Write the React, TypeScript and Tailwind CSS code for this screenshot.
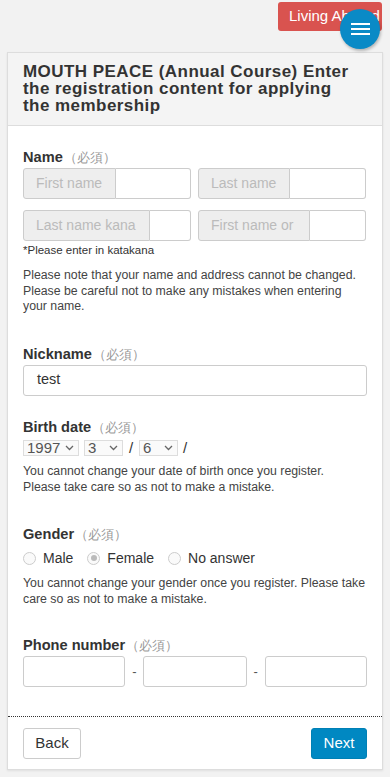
import React from "react";

const Req = () => <span className="text-[13px] font-normal text-[#999] ml-[1px]">（必須）</span>;

function Addon({ label, addonW, inputW }: { label: string; addonW: string; inputW: string }) {
  return (
    <div className="flex h-[31px]">
      <div className={`${addonW} flex items-center pl-[12px] bg-[#eee] border border-[#ccc] rounded-l-[3px] text-[14px] text-[#bbb] whitespace-nowrap overflow-hidden`}>
        {label}
      </div>
      <div className={`${inputW} bg-white border border-l-0 border-[#ccc] rounded-r-[3px]`} />
    </div>
  );
}

function Sel({ v, w }: { v: string; w: string }) {
  return (
    <div className={`${w} h-[16px] flex items-center justify-between border border-[#ddd] bg-[#fafafa] pl-[3px] pr-[4px] text-[15px] leading-none text-[#555]`}>
      <span>{v}</span>
      <svg width="9" height="6" viewBox="0 0 9 6"><path d="M1 1l3.5 3.5L8 1" stroke="#666" strokeWidth="1.3" fill="none" /></svg>
    </div>
  );
}

function Radio({ checked, label }: { checked?: boolean; label: string }) {
  return (
    <div className="flex items-center mr-[14px]">
      <span className="w-[13px] h-[13px] rounded-full border border-[#ccc] bg-[#fafafa] flex items-center justify-center">
        {checked && <span className="w-[6px] h-[6px] rounded-full bg-[#bbb]" />}
      </span>
      <span className="ml-[7px] text-[14px] text-[#333]">{label}</span>
    </div>
  );
}

const P = ({ lines, className }: { lines: string[]; className?: string }) => (
  <div className={`text-[12.3px] leading-[15.5px] text-[#444] ${className ?? ""}`}>
    {lines.map((l, i) => (
      <div key={i} className="whitespace-nowrap">{l}</div>
    ))}
  </div>
);

export default function App() {
  return (
    <div className="min-h-[777px] bg-[#f2f2f2] font-['Liberation_Sans',sans-serif] text-[#333] pb-[6px]">
      <div className="relative h-[52px]">
        <div className="absolute left-[278px] top-[2px] w-[104px] h-[29px] bg-[#d9534f] rounded-[3px] text-white text-[15px] flex items-center pl-[11px] overflow-hidden whitespace-nowrap">
          Living Abroad
        </div>
        <div className="absolute left-[340px] top-[9px] w-[40px] h-[40px] rounded-full bg-[#0a8ac6] shadow-[1px_2px_3px_rgba(0,0,0,0.25)] flex flex-col items-center justify-center gap-[3px]">
          <span className="w-[19px] h-[2px] bg-white" />
          <span className="w-[19px] h-[2px] bg-white" />
          <span className="w-[19px] h-[2px] bg-white" />
        </div>
      </div>
      <div className="mx-[7px] bg-white border border-[#ddd] shadow-[0_1px_2px_rgba(0,0,0,0.08)]">
        <div className="bg-[#f4f4f4] border-b border-[#ddd] px-[15px] pt-[10px] pb-[11px] text-[17px] tracking-[0.45px] font-bold leading-[17px] text-[#333]">
          <div className="whitespace-nowrap">MOUTH PEACE (Annual Course) Enter</div>
          <div className="whitespace-nowrap">the registration content for applying</div>
          <div className="whitespace-nowrap">the membership</div>
        </div>
        <div className="px-[15px] pt-[22px]">
          <div className="text-[14.6px] font-bold leading-[18px]">Name<Req /></div>
          <div className="mt-[1px] flex gap-[7px]">
            <Addon label="First name" addonW="w-[93px]" inputW="w-[75px]" />
            <Addon label="Last name" addonW="w-[92px]" inputW="w-[76px]" />
          </div>
          <div className="mt-[11px] flex gap-[7px]">
            <Addon label="Last name kana" addonW="w-[127px]" inputW="w-[41px]" />
            <Addon label="First name or" addonW="w-[112px]" inputW="w-[56px]" />
          </div>
          <div className="mt-[2px] text-[11.5px] leading-[15px] text-[#333]">*Please enter in katakana</div>
          <P
            className="mt-[10px]"
            lines={[
              "Please note that your name and address cannot be changed.",
              "Please be careful not to make any mistakes when entering",
              "your name.",
            ]}
          />

          <div className="mt-[30px] text-[14.6px] font-bold leading-[18px]">Nickname<Req /></div>
          <div className="mt-[1px] h-[31px] border border-[#ccc] rounded-[3px] flex items-center pl-[13px] text-[14.5px] text-[#333]">test</div>

          <div className="mt-[22px] text-[14.6px] font-bold leading-[18px]">Birth date<Req /></div>
          <div className="flex items-center text-[15px] text-[#333]">
            <Sel v="1997" w="w-[56px]" />
            <span className="w-[5px]" />
            <Sel v="3" w="w-[39px]" />
            <span className="w-[16px] text-center">/</span>
            <Sel v="6" w="w-[39px]" />
            <span className="ml-[5px]">/</span>
          </div>
          <P
            className="mt-[5px]"
            lines={[
              "You cannot change your date of birth once you register.",
              "Please take care so as not to make a mistake.",
            ]}
          />

          <div className="mt-[30px] text-[14.6px] font-bold leading-[18px]">Gender<Req /></div>
          <div className="mt-[5px] flex items-center h-[18px]">
            <Radio label="Male" />
            <Radio label="Female" checked />
            <Radio label="No answer" />
          </div>
          <P
            className="mt-[9px]"
            lines={[
              "You cannot change your gender once you register. Please take",
              "care so as not to make a mistake.",
            ]}
          />

          <div className="mt-[29px] text-[14.6px] font-bold leading-[18px]">Phone number<Req /></div>
          <div className="mt-[1px] flex items-center">
            <div className="w-[103px] h-[31px] border border-[#ccc] rounded-[3px]" />
            <span className="w-[18px] text-center text-[13px] text-[#555]">-</span>
            <div className="w-[104px] h-[31px] border border-[#ccc] rounded-[3px]" />
            <span className="w-[18px] text-center text-[13px] text-[#555]">-</span>
            <div className="w-[103px] h-[31px] border border-[#ccc] rounded-[3px]" />
          </div>
          <div className="h-[29px]" />
        </div>
        <div className="border-t border-dotted border-[#333] flex justify-between px-[15px] pt-[11px] pb-[10px]">
          <button className="w-[58px] h-[31px] border border-[#ccc] rounded-[3px] bg-white text-[15px] text-[#333]">Back</button>
          <button className="w-[56px] h-[31px] rounded-[3px] bg-[#0088c2] border border-[#0080b5] text-[15px] text-white">Next</button>
        </div>
      </div>
    </div>
  );
}
